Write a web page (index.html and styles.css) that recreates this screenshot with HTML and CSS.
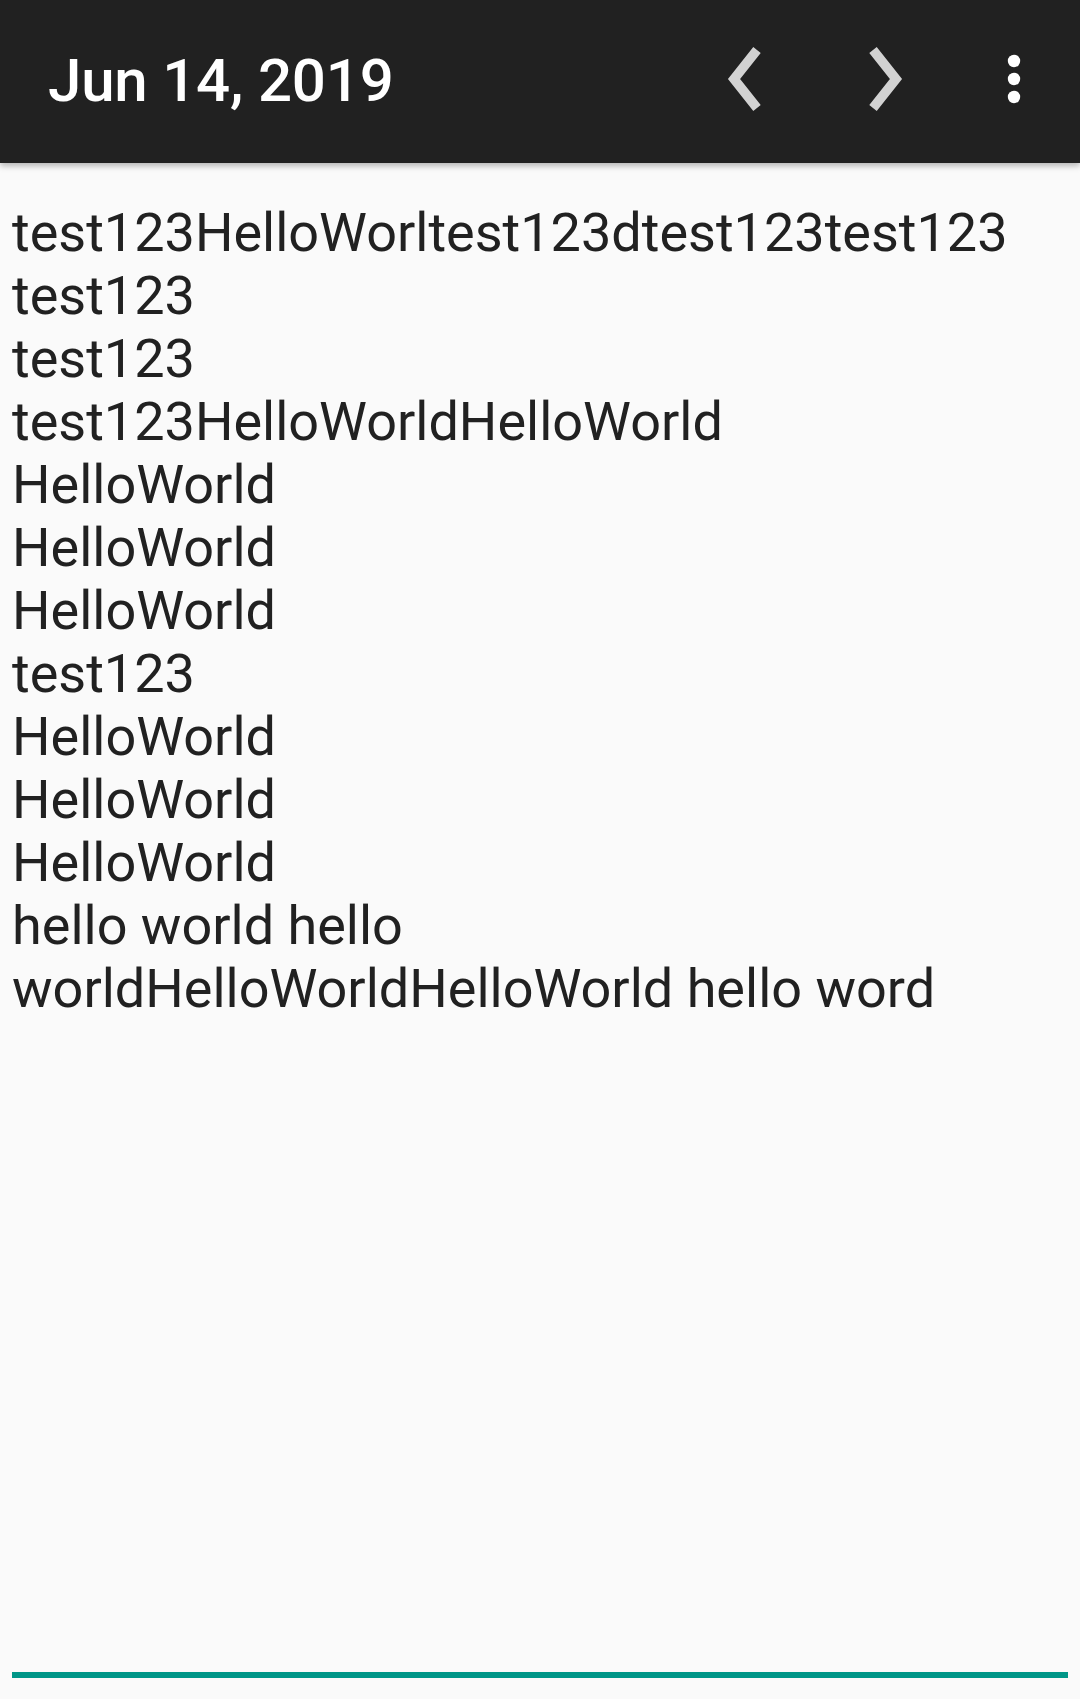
FILE: index.html
```html
<!DOCTYPE html>
<html>
<head>
<meta charset="utf-8">
<link rel="stylesheet" href="styles.css">
</head>
<body>
<header class="toolbar">
  <div class="title">Jun 14, 2019</div>
  <div class="spacer"></div>
  <svg class="chev chev-left" width="48" height="70" viewBox="0 0 48 70"><polyline points="37,6 14,35 37,64" fill="none" stroke="#d2d2d2" stroke-width="9.5" stroke-linejoin="miter" stroke-linecap="butt"/></svg>
  <svg class="chev chev-right" width="48" height="70" viewBox="0 0 48 70"><polyline points="11,6 34,35 11,64" fill="none" stroke="#d2d2d2" stroke-width="9.5" stroke-linejoin="miter" stroke-linecap="butt"/></svg>
  <svg class="more" width="24" height="70" viewBox="0 0 24 70"><circle cx="12" cy="17" r="6.2" fill="#fff"/><circle cx="12" cy="35" r="6.2" fill="#fff"/><circle cx="12" cy="53" r="6.2" fill="#fff"/></svg>
</header>
<main class="editor">
  <div class="line">test123HelloWorltest123dtest123test123</div>
  <div class="line">test123</div>
  <div class="line">test123</div>
  <div class="line">test123HelloWorldHelloWorld</div>
  <div class="line">HelloWorld</div>
  <div class="line">HelloWorld</div>
  <div class="line">HelloWorld</div>
  <div class="line">test123</div>
  <div class="line">HelloWorld</div>
  <div class="line">HelloWorld</div>
  <div class="line">HelloWorld</div>
  <div class="line">hello world hello</div>
  <div class="line">worldHelloWorldHelloWorld hello word</div>
</main>
</body>
</html>
```
FILE: styles.css
```css
html, body {
  margin: 0;
  padding: 0;
}
body {
  background: #fafafa;
  font-family: Roboto, "Noto Sans", sans-serif;
  min-height: 1699px;
  display: flex;
  flex-direction: column;
  box-sizing: border-box;
}
.toolbar {
  height: 163px;
  flex: none;
  background: #212121;
  display: flex;
  align-items: center;
  padding: 0 54px 5px 48px;
  box-sizing: border-box;
  box-shadow: 0 3px 6px rgba(0,0,0,0.28);
  position: relative;
  z-index: 1;
}
.title {
  color: #ffffff;
  font-size: 60px;
  font-weight: 500;
  letter-spacing: -0.2px;
  line-height: 1;
  padding-top: 4px;
}
.spacer {
  flex: 1;
}
.chev, .more {
  display: block;
  flex: none;
}
.chev-right {
  margin-left: 94px;
}
.more {
  margin-left: 92px;
}
.editor {
  flex: 1;
  margin: 0 12px 21px;
  padding-top: 38px;
  border-bottom: 6px solid #009688;
  color: #212121;
  font-size: 54px;
  line-height: 63px;
}
.line {
  white-space: nowrap;
}
```
